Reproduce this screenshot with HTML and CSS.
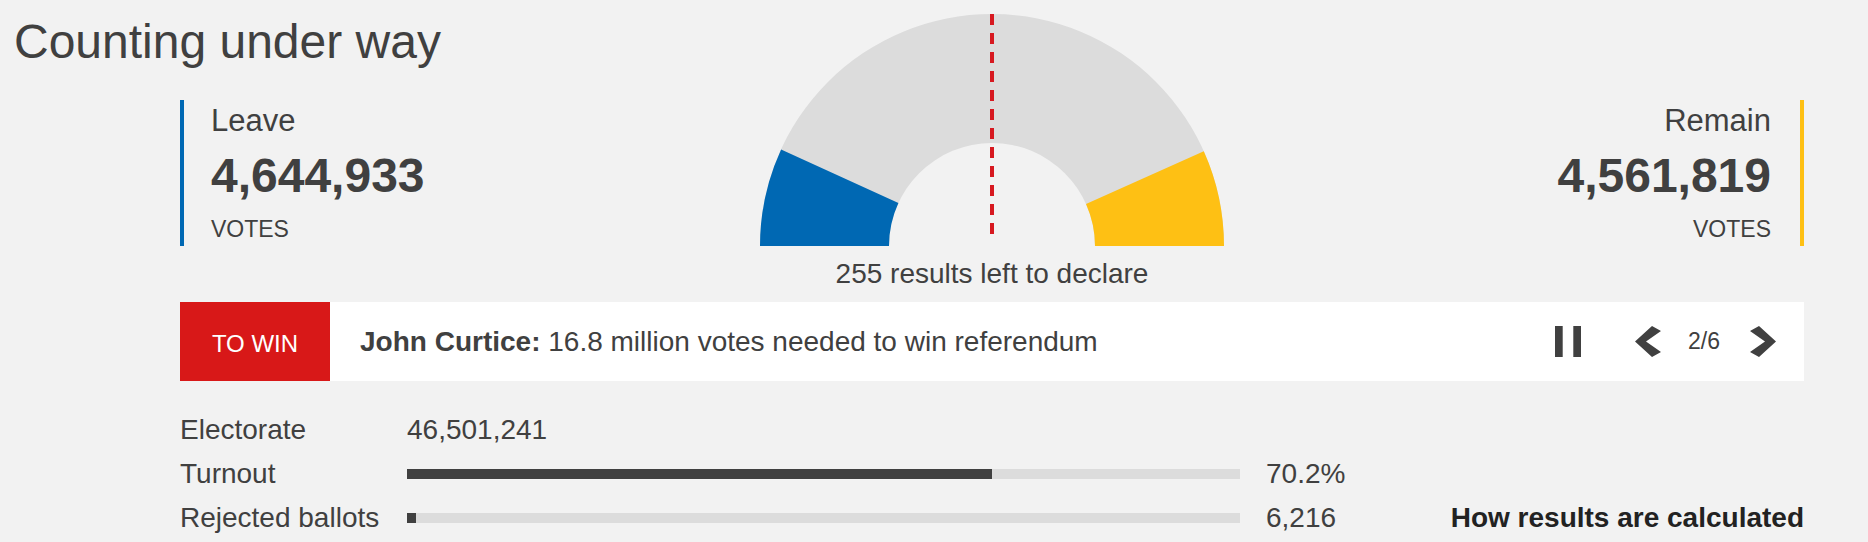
FILE: index.html
```html
<!DOCTYPE html>
<html lang="en">
<head>
<meta charset="utf-8">
<title>EU referendum results</title>
<link rel="stylesheet" href="styles.css">
</head>
<body>
<div class="page">
  <section class="top">
    <h1 class="title">Counting under way</h1>
    <div class="side side-leave">
      <div class="side-name">Leave</div>
      <div class="side-votes">4,644,933</div>
      <div class="side-unit">VOTES</div>
    </div>
    <div class="gauge">
      <svg class="gauge-svg" width="464" height="232" viewBox="0 0 464 232">
        <path class="arc-rest" d="M0 232 A232 232 0 0 1 464 232 L335 232 A103 103 0 0 0 129 232 Z"/>
        <path class="arc-leave" d="M0 232 A232 232 0 0 1 21.1 135.4 L138.4 189.1 A103 103 0 0 0 129 232 Z"/>
        <path class="arc-remain" d="M464 232 L335 232 A103 103 0 0 0 326 189.9 L443.8 137.3 A232 232 0 0 1 464 232 Z"/>
        <line class="arc-mid" x1="232" y1="0" x2="232" y2="227"/>
      </svg>
    </div>
    <div class="side side-remain">
      <div class="side-name">Remain</div>
      <div class="side-votes">4,561,819</div>
      <div class="side-unit">VOTES</div>
    </div>
    <div class="caption">255 results left to declare</div>
  </section>

  <div class="main">
    <div class="ticker">
      <div class="ticker-label">TO WIN</div>
      <div class="ticker-text"><strong>John Curtice:</strong> 16.8 million votes needed to win referendum</div>
      <div class="ticker-controls">
        <svg class="ctl ctl-pause" width="26" height="31" viewBox="0 0 26 31"><rect x="0" y="0" width="7.7" height="31"/><rect x="18.3" y="0" width="7.7" height="31"/></svg>
        <svg class="ctl ctl-prev" width="26" height="31" viewBox="0 0 26 31"><polygon points="17,0 26,5 11,15.5 26,26 17,31 0,15.5"/></svg>
        <span class="ctl-count">2/6</span>
        <svg class="ctl ctl-next" width="26" height="31" viewBox="0 0 26 31"><polygon points="9,0 0,5 15,15.5 0,26 9,31 26,15.5"/></svg>
      </div>
    </div>

    <div class="stats">
      <div class="stat-label">Electorate</div>
      <div class="stat-wide">46,501,241</div>

      <div class="stat-label">Turnout</div>
      <div class="track"><div class="fill" style="width:70.2%"></div></div>
      <div class="stat-value">70.2%</div>

      <div class="stat-label">Rejected ballots</div>
      <div class="track"><div class="fill" style="width:1.1%"></div></div>
      <div class="stat-value">6,216</div>
      <div class="stat-link">How results are calculated</div>
    </div>
  </div>
</div>
</body>
</html>
```

FILE: styles.css
```css
html, body {
  margin: 0;
  padding: 0;
  background: #f2f2f2;
}

body {
  font-family: "Liberation Sans", Arial, Helvetica, sans-serif;
  color: #404040;
}

.page {
  padding: 0 64px 0 14px;
}

.top {
  display: grid;
  grid-template-columns: 166px 1fr 464px 1fr;
  align-items: end;
  padding-top: 14px;
}

.title {
  grid-column: 1 / 3;
  grid-row: 1;
  align-self: start;
  margin: 0;
  font-size: 48px;
  line-height: 55px;
  font-weight: normal;
  color: #404040;
}

.side {
  grid-row: 1;
  height: 146px;
  box-sizing: border-box;
  padding-top: 2px;
}

.side-leave {
  grid-column: 2;
  justify-self: start;
  border-left: 4px solid #0068b3;
  padding-left: 27px;
}

.side-remain {
  grid-column: 4;
  justify-self: end;
  border-right: 4px solid #fec014;
  padding-right: 29px;
  text-align: right;
}

.side-name {
  font-size: 31px;
  line-height: 38px;
}

.side-votes {
  font-size: 48px;
  line-height: 72px;
  font-weight: bold;
}

.side-unit {
  font-size: 23px;
  line-height: 34px;
}

.gauge {
  grid-column: 3;
  grid-row: 1;
}

.gauge-svg {
  display: block;
}

.arc-rest { fill: #dcdcdc; }
.arc-leave { fill: #0068b3; }
.arc-remain { fill: #fec014; }
.arc-mid {
  stroke: #d71920;
  stroke-width: 4;
  stroke-dasharray: 11 8;
}

.caption {
  grid-column: 3;
  grid-row: 2;
  text-align: center;
  font-size: 28px;
  line-height: 32px;
  padding-top: 12px;
}

.main {
  margin-left: 166px;
}

.ticker {
  margin-top: 12px;
  height: 79px;
  background: #ffffff;
  display: flex;
  align-items: center;
}

.ticker-label {
  align-self: stretch;
  width: 150px;
  box-sizing: border-box;
  padding-top: 5px;
  background: #d81818;
  color: #ffffff;
  font-size: 24px;
  display: flex;
  align-items: center;
  justify-content: center;
}

.ticker-text {
  flex: 1;
  padding-left: 30px;
  font-size: 28px;
  line-height: 32px;
}

.ticker-text strong {
  font-weight: bold;
}

.ticker-controls {
  display: flex;
  align-items: center;
  padding-right: 28px;
}

.ctl {
  display: block;
  fill: #404040;
}

.ctl-pause { margin-right: 54px; }
.ctl-prev { margin-right: 27px; }
.ctl-next { margin-left: 30px; }

.ctl-count {
  font-size: 23px;
  line-height: 31px;
}

.stats {
  margin-top: 27px;
  display: grid;
  grid-template-columns: 227px 833px 1fr auto;
  align-items: center;
  font-size: 28px;
  line-height: 44px;
}

.stat-label {
  grid-column: 1;
}

.stat-wide {
  grid-column: 2 / -1;
}

.track {
  grid-column: 2;
  height: 10px;
  background: #dcdcdc;
}

.fill {
  height: 100%;
  background: #404040;
}

.stat-value {
  grid-column: 3;
  padding-left: 26px;
}

.stat-link {
  grid-column: 4;
  justify-self: end;
  font-weight: bold;
  color: #222222;
}
```
